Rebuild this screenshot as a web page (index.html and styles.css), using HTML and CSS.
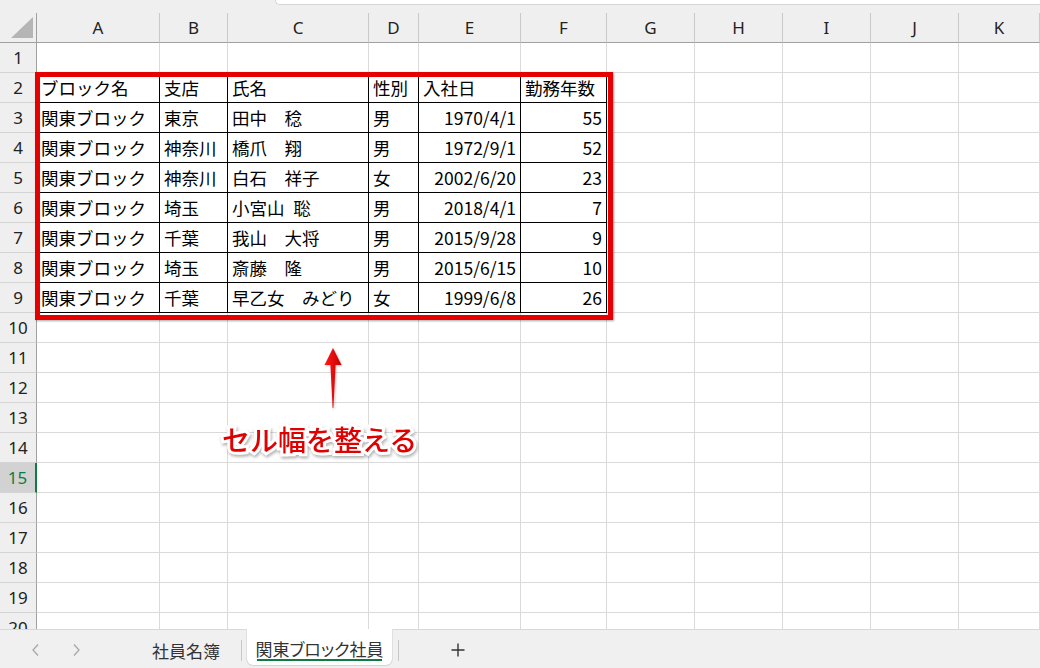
FILE: index.html
```html
<!DOCTYPE html>
<html lang="ja">
<head>
    <meta charset="UTF-8">
    <title>関東ブロック社員</title>
    <link rel="stylesheet" href="styles.css">
</head>
<body>
    <div class="app">
        <div class="topstrip"><div class="formula-edge"></div></div>

        <div class="sheet">
            <div class="row head">
                <div class="corner"><span class="tri"></span></div>
                <div class="ch">A</div><div class="ch">B</div><div class="ch">C</div><div class="ch">D</div><div class="ch">E</div><div class="ch">F</div>
                <div class="ch">G</div><div class="ch">H</div><div class="ch">I</div><div class="ch">J</div><div class="ch">K</div>
            </div>

            <div class="row"><div class="rh">1</div><div class="c top"></div><div class="c top"></div><div class="c top"></div><div class="c top"></div><div class="c top"></div><div class="c top"></div><div class="c"></div><div class="c"></div><div class="c"></div><div class="c"></div><div class="c"></div></div>
            <div class="row"><div class="rh">2</div><div class="c t">ブロック名</div><div class="c t">支店</div><div class="c t">氏名</div><div class="c t">性別</div><div class="c t">入社日</div><div class="c t">勤務年数</div><div class="c"></div><div class="c"></div><div class="c"></div><div class="c"></div><div class="c"></div></div>
            <div class="row"><div class="rh">3</div><div class="c t">関東ブロック</div><div class="c t">東京</div><div class="c t">田中　稔</div><div class="c t">男</div><div class="c t n">1970/4/1</div><div class="c t n">55</div><div class="c"></div><div class="c"></div><div class="c"></div><div class="c"></div><div class="c"></div></div>
            <div class="row"><div class="rh">4</div><div class="c t">関東ブロック</div><div class="c t">神奈川</div><div class="c t">橋爪　翔</div><div class="c t">男</div><div class="c t n">1972/9/1</div><div class="c t n">52</div><div class="c"></div><div class="c"></div><div class="c"></div><div class="c"></div><div class="c"></div></div>
            <div class="row"><div class="rh">5</div><div class="c t">関東ブロック</div><div class="c t">神奈川</div><div class="c t">白石　祥子</div><div class="c t">女</div><div class="c t n">2002/6/20</div><div class="c t n">23</div><div class="c"></div><div class="c"></div><div class="c"></div><div class="c"></div><div class="c"></div></div>
            <div class="row"><div class="rh">6</div><div class="c t">関東ブロック</div><div class="c t">埼玉</div><div class="c t">小宮山&ensp;聡</div><div class="c t">男</div><div class="c t n">2018/4/1</div><div class="c t n">7</div><div class="c"></div><div class="c"></div><div class="c"></div><div class="c"></div><div class="c"></div></div>
            <div class="row"><div class="rh">7</div><div class="c t">関東ブロック</div><div class="c t">千葉</div><div class="c t">我山　大将</div><div class="c t">男</div><div class="c t n">2015/9/28</div><div class="c t n">9</div><div class="c"></div><div class="c"></div><div class="c"></div><div class="c"></div><div class="c"></div></div>
            <div class="row"><div class="rh">8</div><div class="c t">関東ブロック</div><div class="c t">埼玉</div><div class="c t">斎藤　隆</div><div class="c t">男</div><div class="c t n">2015/6/15</div><div class="c t n">10</div><div class="c"></div><div class="c"></div><div class="c"></div><div class="c"></div><div class="c"></div></div>
            <div class="row"><div class="rh">9</div><div class="c t">関東ブロック</div><div class="c t">千葉</div><div class="c t">早乙女　みどり</div><div class="c t">女</div><div class="c t n">1999/6/8</div><div class="c t n">26</div><div class="c"></div><div class="c"></div><div class="c"></div><div class="c"></div><div class="c"></div></div>
            <div class="row"><div class="rh">10</div><div class="c"></div><div class="c"></div><div class="c"></div><div class="c"></div><div class="c"></div><div class="c"></div><div class="c"></div><div class="c"></div><div class="c"></div><div class="c"></div><div class="c"></div></div>
            <div class="row"><div class="rh">11</div><div class="c"></div><div class="c"></div><div class="c"></div><div class="c"></div><div class="c"></div><div class="c"></div><div class="c"></div><div class="c"></div><div class="c"></div><div class="c"></div><div class="c"></div></div>
            <div class="row"><div class="rh">12</div><div class="c"></div><div class="c"></div><div class="c"></div><div class="c"></div><div class="c"></div><div class="c"></div><div class="c"></div><div class="c"></div><div class="c"></div><div class="c"></div><div class="c"></div></div>
            <div class="row"><div class="rh">13</div><div class="c"></div><div class="c"></div><div class="c"></div><div class="c"></div><div class="c"></div><div class="c"></div><div class="c"></div><div class="c"></div><div class="c"></div><div class="c"></div><div class="c"></div></div>
            <div class="row"><div class="rh">14</div><div class="c"></div><div class="c"></div><div class="c"></div><div class="c"></div><div class="c"></div><div class="c"></div><div class="c"></div><div class="c"></div><div class="c"></div><div class="c"></div><div class="c"></div></div>
            <div class="row"><div class="rh active">15</div><div class="c"></div><div class="c"></div><div class="c"></div><div class="c"></div><div class="c"></div><div class="c"></div><div class="c"></div><div class="c"></div><div class="c"></div><div class="c"></div><div class="c"></div></div>
            <div class="row"><div class="rh">16</div><div class="c"></div><div class="c"></div><div class="c"></div><div class="c"></div><div class="c"></div><div class="c"></div><div class="c"></div><div class="c"></div><div class="c"></div><div class="c"></div><div class="c"></div></div>
            <div class="row"><div class="rh">17</div><div class="c"></div><div class="c"></div><div class="c"></div><div class="c"></div><div class="c"></div><div class="c"></div><div class="c"></div><div class="c"></div><div class="c"></div><div class="c"></div><div class="c"></div></div>
            <div class="row"><div class="rh">18</div><div class="c"></div><div class="c"></div><div class="c"></div><div class="c"></div><div class="c"></div><div class="c"></div><div class="c"></div><div class="c"></div><div class="c"></div><div class="c"></div><div class="c"></div></div>
            <div class="row"><div class="rh">19</div><div class="c"></div><div class="c"></div><div class="c"></div><div class="c"></div><div class="c"></div><div class="c"></div><div class="c"></div><div class="c"></div><div class="c"></div><div class="c"></div><div class="c"></div></div>
            <div class="row"><div class="rh">20</div><div class="c"></div><div class="c"></div><div class="c"></div><div class="c"></div><div class="c"></div><div class="c"></div><div class="c"></div><div class="c"></div><div class="c"></div><div class="c"></div><div class="c"></div></div>
        </div>

        <div class="tabs">
            <svg class="nav" width="10" height="14" viewBox="0 0 10 14"><path d="M7 1.5 L2 7 L7 12.5" fill="none" stroke="#a8a8a8" stroke-width="1.3"/></svg>
            <svg class="nav next" width="10" height="14" viewBox="0 0 10 14"><path d="M3 1.5 L8 7 L3 12.5" fill="none" stroke="#a8a8a8" stroke-width="1.3"/></svg>
            <div class="tab">社員名簿</div>
            <span class="sep"></span>
            <div class="tab current">関東ブロック社員</div>
            <span class="sep"></span>
            <svg class="add" width="14" height="14" viewBox="0 0 14 14"><path d="M7 0.5 V13.5 M0.5 7 H13.5" stroke="#333" stroke-width="1.4"/></svg>
        </div>

        <!-- annotation layer -->
        <div class="frame"></div>
        <svg class="arrow" width="22" height="64" viewBox="0 0 22 64">
            <defs>
                <linearGradient id="ar" x1="0" y1="0" x2="1" y2="0">
                    <stop offset="0" stop-color="#ff1a1a"/>
                    <stop offset="1" stop-color="#c80000"/>
                </linearGradient>
            </defs>
            <path d="M11 2 L19.5 19 L13.6 19 L11.4 62 L10.6 62 L8.4 19 L2.5 19 Z" fill="url(#ar)"/>
        </svg>
        <div class="note">セル幅を整える</div>
    </div>
</body>
</html>
```

FILE: styles.css
```css
:root {
    --cols: 37px 123px 68px 141px 50px 102px 86px 88px 88px 88px 88px 81px;
    --grid: #dadada;
    --head: #efefef;
    --xl-green: #107c41;
}

* {
    margin: 0;
    padding: 0;
    box-sizing: border-box;
}

body {
    background: #fff;
    font-family: "Noto Sans CJK JP", "Noto Sans", sans-serif;
    color: #000;
}

.app {
    position: relative;
    width: 1040px;
    height: 668px;
    display: flex;
    flex-direction: column;
    overflow: hidden;
}

.topstrip {
    height: 13px;
    background: var(--head);
    flex-shrink: 0;
    display: flex;
    justify-content: flex-end;
}

.formula-edge {
    width: 765px;
    height: 5px;
    background: #fff;
    border-left: 1px solid #d4d4d4;
    border-bottom: 1px solid #d4d4d4;
    border-bottom-left-radius: 5px;
}

.sheet {
    flex: 1;
    overflow: hidden;
}

.row {
    display: grid;
    grid-template-columns: var(--cols);
    height: 30px;
}

.head .ch,
.corner {
    background: var(--head);
    border-bottom: 1px solid #a0a0a0;
    border-right: 1px solid #c9c9c9;
    display: flex;
    align-items: center;
    justify-content: center;
    font-family: "Noto Sans", sans-serif;
    font-size: 17px;
    color: #222;
}

.corner {
    position: relative;
    border-right-color: #a0a0a0;
}

.tri {
    position: absolute;
    left: 11px;
    top: 4px;
    width: 22px;
    height: 21px;
    background: #b5b5b5;
    clip-path: polygon(100% 0, 100% 100%, 0 100%);
}

.rh {
    background: var(--head);
    border-right: 1px solid #a0a0a0;
    border-bottom: 1px solid #d4d4d4;
    display: flex;
    align-items: center;
    justify-content: center;
    font-family: "Noto Sans", sans-serif;
    font-size: 17px;
    color: #222;
}

.rh.active {
    background: #d2d2d2;
    color: var(--xl-green);
    border-right: 2px solid var(--xl-green);
}

.c {
    border-right: 1px solid var(--grid);
    border-bottom: 1px solid var(--grid);
    padding: 0 4px;
    display: flex;
    align-items: center;
    font-size: 17.5px;
    white-space: pre;
    overflow: hidden;
}

.c.top {
    border-bottom-color: #000;
}

.c.t {
    border-color: #000;
}

.c.n {
    justify-content: flex-end;
}

/* sheet tabs */
.tabs {
    height: 39px;
    flex-shrink: 0;
    background: #f0f0f0;
    border-top: 1px solid #d8d8d8;
    display: flex;
    align-items: center;
    font-size: 17px;
    color: #333;
}

.nav {
    margin-left: 31px;
    margin-top: 2px;
}

.nav.next {
    margin-left: 30px;
}

.tab {
    margin-left: 71px;
    margin-right: 21px;
    margin-top: 2px;
}

.tab.current {
    align-self: stretch;
    margin: -1px 0 3px 5px;
    width: 145px;
    background: #fff;
    border-radius: 0 0 6px 6px;
    box-shadow: 0 1px 1px rgba(0, 0, 0, 0.12), 1px 0 0 #e2e2e2, -1px 0 0 #e2e2e2;
    display: flex;
    align-items: center;
    justify-content: center;
    position: relative;
    font-feature-settings: "palt";
    padding-top: 2px;
}

.tab.current::after {
    content: "";
    position: absolute;
    left: 10px;
    right: 10px;
    bottom: 4px;
    height: 2px;
    background: var(--xl-green);
}

.sep {
    width: 1px;
    height: 21px;
    background: #c8c8c8;
    margin-top: 2px;
}

.tab.current + .sep {
    margin-left: 6px;
}

.add {
    margin-left: 52px;
    margin-top: 2px;
}

/* red callout */
.frame {
    position: absolute;
    left: 35px;
    top: 72px;
    width: 578px;
    height: 248px;
    border: 5px solid #e60000;
    box-shadow: 1px 1px 2px rgba(0, 0, 0, 0.35);
}

.arrow {
    position: absolute;
    left: 322px;
    top: 346px;
    filter: drop-shadow(1px 1px 1px rgba(0, 0, 0, 0.25));
}

.note {
    position: absolute;
    left: 222px;
    top: 424px;
    font-size: 28px;
    line-height: 30px;
    font-weight: 500;
    color: #e00000;
    -webkit-text-stroke: 6px #fff;
    paint-order: stroke fill;
    filter: drop-shadow(1px 2px 1.5px rgba(0, 0, 0, 0.3));
    white-space: nowrap;
}
```
